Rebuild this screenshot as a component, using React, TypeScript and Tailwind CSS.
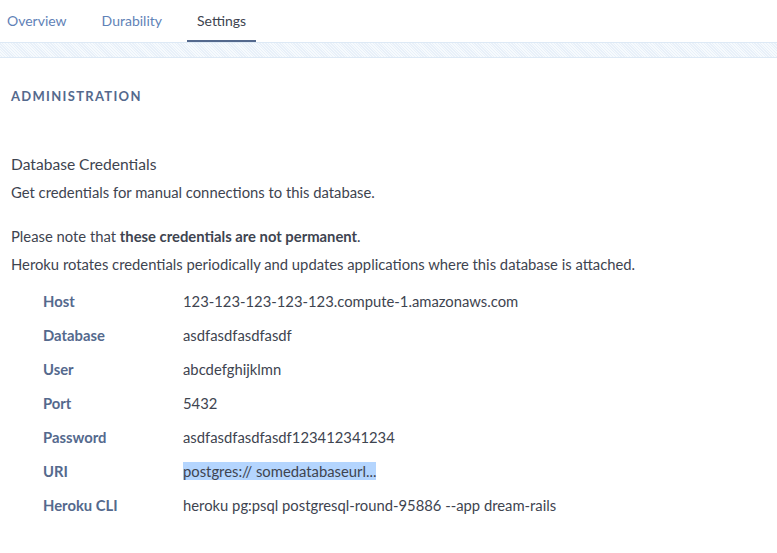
import type { ReactNode } from 'react'

const rows: { label: string; value: ReactNode }[] = [
  { label: 'Host', value: '123-123-123-123-123.compute-1.amazonaws.com' },
  { label: 'Database', value: 'asdfasdfasdfasdf' },
  { label: 'User', value: 'abcdefghijklmn' },
  { label: 'Port', value: '5432' },
  { label: 'Password', value: 'asdfasdfasdfasdf123412341234' },
  {
    label: 'URI',
    value: <span className="bg-[#b4d5fe]">postgres:// somedatabaseurl...</span>,
  },
  { label: 'Heroku CLI', value: 'heroku pg:psql postgresql-round-95886 --app dream-rails' },
]

const tabs = ['Overview', 'Durability', 'Settings']

export default function App() {
  return (
    <div className="min-h-[553px] w-[777px] bg-white font-['Lato','Liberation_Sans',sans-serif] text-[14.8px] leading-[20px] text-[#3e4450]">
      <nav className="flex h-[42px] items-end gap-[15px]">
        {tabs.map((tab, i) => {
          const active = tab === 'Settings'
          return (
            <div
              key={tab}
              className={
                active
                  ? 'flex h-full items-center border-b-[2px] border-[#54698d] px-[10px] pt-[2px] text-[14px] text-[#3e4450]'
                  : i === 0
                    ? 'flex h-full items-center pr-[10px] pl-[7px] text-[14px] text-[#5f82b7]'
                    : 'flex h-full items-center px-[10px] text-[14px] text-[#5f82b7]'
              }
            >
              {tab}
            </div>
          )
        })}
      </nav>
      <div className="h-[16px] border-y border-[#dde9f5] bg-[repeating-linear-gradient(45deg,#f6fafd_0px,#f6fafd_1px,#e8f0f9_1px,#e8f0f9_2px)]" />

      <section className="px-[11px]">
        <h2 className="mt-[30px] text-[13px] leading-[16px] font-bold tracking-[0.1em] text-[#54698d] uppercase">
          Administration
        </h2>

        <h3 className="mt-[50px] text-[15.6px] text-[#3e4450]">Database Credentials</h3>
        <p className="mt-[8px]">Get credentials for manual connections to this database.</p>
        <p className="mt-[24px]">
          Please note that <strong className="font-bold">these credentials are not permanent</strong>.
        </p>
        <p className="mt-[8px]">
          Heroku rotates credentials periodically and updates applications where this database is attached.
        </p>

        <dl className="mt-[17px] flex flex-col gap-[14px] pl-[32px]">
          {rows.map((row) => (
            <div key={row.label} className="flex h-[20px] items-center">
              <dt className="w-[140px] font-bold text-[#54698d]">{row.label}</dt>
              <dd>{row.value}</dd>
            </div>
          ))}
        </dl>
      </section>
    </div>
  )
}
